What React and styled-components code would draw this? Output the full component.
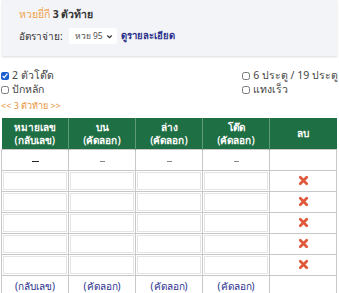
import React from 'react';
import styled, { createGlobalStyle } from 'styled-components';

const Global = createGlobalStyle`
    body{
        margin: 0;
        background: #fff;
        font-family: "Noto Sans", "Open Sans", sans-serif;
        color: #444;
    }
`

const Page = styled.div`
    width: 339px;
    height: 293px;
    overflow: hidden;
`

const Panel = styled.div`
    margin: 0 2px 0 2px;
    height: 56px;
    box-sizing: border-box;
    padding: 7px 17px 0;
    background: #f3f4f8;
    box-shadow: 0 1px 2px rgba(0,0,0,0.15);
    display: flex;
    flex-direction: column;
    gap: 7px;
`

const Title = styled.div`
    font-size: 10.5px;
    font-weight: 700;
    color: #333;
    line-height: 14px;
    span{
        color: #f0a24a;
        font-weight: 400;
    }
`

const RateRow = styled.div`
    display: flex;
    align-items: center;
    gap: 6px;
    font-size: 10px;
    color: #333;
    line-height: 16px;
`

const Select = styled.div`
    display: flex;
    align-items: center;
    gap: 3px;
    background: #fff;
    height: 16px;
    padding: 0 4px 0 6px;
    border-radius: 2px;
    font-size: 8.5px;
    color: #555;
    svg{ width: 7px; height: 7px; }
`

const DetailLink = styled.a`
    color: #2a2f8c;
    font-weight: 700;
    font-size: 9.5px;
    text-decoration: none;
    margin-left: -2px;
`

const Options = styled.div`
    margin-top: 13px;
    padding: 0 1px;
    display: grid;
    grid-template-columns: 1fr auto;
    row-gap: 1px;
`

const Check = styled.label`
    display: flex;
    align-items: center;
    gap: 3px;
    font-size: 10.5px;
    color: #444;
    line-height: 13px;
    input{
        margin: 0;
        width: 8px;
        height: 8px;
        accent-color: #1b5fd0;
    }
`

const Crumb = styled.div`
    margin: 3px 0 0 1px;
    font-size: 9px;
    color: #e8943c;
    line-height: 13px;
`

const Table = styled.table`
    margin: 6px 2px 0 1px;
    width: 336px;
    border-collapse: collapse;
    table-layout: fixed;
    font-size: 10px;
`

const Th = styled.th`
    background: #1f6f44;
    color: #fff;
    font-weight: 600;
    height: 31px;
    line-height: 13px;
    padding: 0;
    border-left: 1px solid #5f9a78;
    &:first-child{ border-left: none; }
`

const Row = styled.tr`
    height: ${p => p.$h}px;
`

const Td = styled.td`
    border: 1px solid #c8c8c8;
    padding: ${p => p.$input ? '1px' : '0'};
    text-align: center;
    vertical-align: middle;
    color: ${p => p.$link ? '#2b2f8e' : '#333'};
    line-height: 12px;
`

const Box = styled.div`
    height: 18px;
    border: 1px solid #e4e4e4;
    box-sizing: border-box;
    background: #fff;
`

const Dash = styled.span`
    display: inline-block;
    width: ${p => p.$w}px;
    height: 1px;
    background: ${p => p.$c};
    vertical-align: middle;
`

const Del = styled.span`
    display: inline-flex;
    svg{ width: 11px; height: 11px; }
`

const Cross = () => (
    <Del>
        <svg viewBox="0 0 12 12">
            <path d="M2.5 2.5 L9.5 9.5 M9.5 2.5 L2.5 9.5" stroke="#e0583a" strokeWidth="3" strokeLinecap="round" />
        </svg>
    </Del>
)

const heads = [['หมายเลข', '(กลับเลข)'], ['บน', '(คัดลอก)'], ['ล่าง', '(คัดลอก)'], ['โต๊ด', '(คัดลอก)']]

const App = () => {
    const rows = [0, 1, 2, 3, 4]
    return (
        <Page>
            <Global />
            <Panel>
                <Title><span>หวยยี่กี</span> 3 ตัวท้าย</Title>
                <RateRow>
                    อัตราจ่าย:
                    <Select>
                        หวย 95
                        <svg viewBox="0 0 8 8"><path d="M1.5 2.8 L4 5.3 L6.5 2.8" fill="none" stroke="#333" strokeWidth="1.4" /></svg>
                    </Select>
                    <DetailLink>ดูรายละเอียด</DetailLink>
                </RateRow>
            </Panel>
            <Options>
                <Check><input type="checkbox" defaultChecked /> 2 ตัวโต๊ด</Check>
                <Check><input type="checkbox" /> 6 ประตู / 19 ประตู</Check>
                <Check><input type="checkbox" /> ปักหลัก</Check>
                <Check><input type="checkbox" /> แทงเร็ว</Check>
            </Options>
            <Crumb>&lt;&lt; 3 ตัวท้าย &gt;&gt;</Crumb>
            <Table>
                <thead>
                    <tr>
                        {heads.map(h => <Th key={h[0]}>{h[0]}<br />{h[1]}</Th>)}
                        <Th>ลบ</Th>
                    </tr>
                </thead>
                <tbody>
                    <Row $h={21}>
                        <Td><Dash $w={7} $c="#222" /></Td>
                        <Td><Dash $w={5} $c="#888" /></Td>
                        <Td><Dash $w={5} $c="#888" /></Td>
                        <Td><Dash $w={5} $c="#888" /></Td>
                        <Td></Td>
                    </Row>
                    {rows.map(r => (
                        <Row key={r} $h={21}>
                            {heads.map(h => <Td key={h[0]} $input><Box /></Td>)}
                            <Td><Cross /></Td>
                        </Row>
                    ))}
                    <Row $h={20}>
                        {heads.map(h => <Td key={h[0]} $link>{h[1]}</Td>)}
                        <Td></Td>
                    </Row>
                </tbody>
            </Table>
        </Page>
    );
};

export default App;
